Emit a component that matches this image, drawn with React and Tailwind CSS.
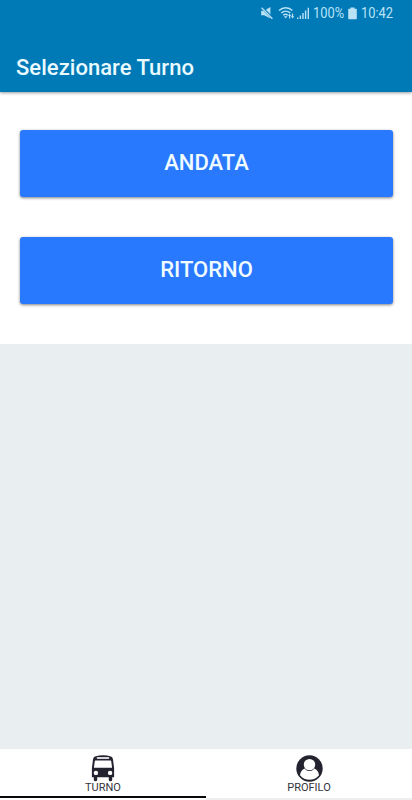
// ─── status bar ───────────────────────────────────────────────────────
function StatusBar() {
  return (
    <div className="h-[26px] flex items-center pl-[260px] text-[#b9e3f5]">
      <svg width="14" height="14" viewBox="0 0 14 14" fill="currentColor" className="shrink-0">
        <path d="M1.2 4.8h3L10.4.9v11.6L4.2 9.2h-3z" />
        <path d="M1.2.8 12.8 12.6" stroke="#0079b7" strokeWidth="2.6" />
        <path d="M1.6 1.8 12.4 12.8" stroke="currentColor" strokeWidth="1.3" />
      </svg>

      {/* wifi with traffic arrows */}
      <svg width="17" height="14" viewBox="0 0 17 14" fill="none" stroke="currentColor" strokeWidth="1.4" className="ml-1 shrink-0">
        <path d="M1 4.6C5 .8 10.6.8 14.4 4.6" />
        <path d="M3.3 7.1c2.7-2.6 6.3-2.6 9 0" />
        <path d="M5.2 9.3c1.5-1.4 3.2-1.4 4.6 0" />
        <path d="M5.9 10.2h3.6L7.7 12.6z" fill="currentColor" stroke="none" />
        <path d="M10 10l1.6-2.4L13.2 10h-1v2.6H11V10zM12.9 10.2h1V7.6h1.2v2.6h1.2l-1.7 2.4z" fill="currentColor" stroke="none" />
      </svg>

      <svg width="13" height="13" viewBox="0 0 13 13" fill="currentColor" className="ml-[2px] shrink-0">
        <path d="M0 10.5h1.4V12H0zM2.7 8.4h1.4V12H2.7zM5.3 6h1.4v6H5.3zM7.9 3.4h1.4V12H7.9zM10.6.8H12V12h-1.4z" />
      </svg>

      <span className="ml-[3px] w-[35px] text-[14px] leading-none origin-left scale-x-[0.92] whitespace-nowrap">100%</span>
      <svg width="9" height="13" viewBox="0 0 9 13" fill="currentColor" className="shrink-0">
        <path d="M2.5.5h4v1.2h1.6q.7 0 .7.7v9.1q0 .8-.7.8H.9q-.7 0-.7-.8V2.4q0-.7.7-.7h1.6z" />
      </svg>
      <span className="ml-1 text-[14px] leading-none origin-left scale-x-[0.92] whitespace-nowrap">10:42</span>
    </div>
  );
}

const BusIcon = () => (
  <svg width="24" height="27" viewBox="0 0 24 27">
    <path d="M4 1.5Q12-1 20 1.5q1.7.6 2 3L23.1 13v9.2h-1.9V25q0 1.3-1.7 1.3T17.8 25v-2.8H6.2V25q0 1.3-1.7 1.3T2.8 25v-2.8H.9V13L2 4.5q.3-2.4 2-3z" fill="#23232f" />
    <rect x="5.7" y="1.9" width="12.6" height="2.1" rx="1" fill="#d6d6d9" />
    <path d="M4.4 5.6h15.2q.5 0 .6.6l.9 6.6H2.9l.9-6.6q.1-.6.6-.6z" fill="#fff" />
    <circle cx="4.9" cy="17.9" r="2.2" fill="#fff" />
    <circle cx="19.1" cy="17.9" r="2.2" fill="#fff" />
  </svg>
);

const ProfileIcon = () => (
  <svg width="27" height="27" viewBox="0 0 27 27">
    <circle cx="13.5" cy="13.5" r="13.2" fill="#23232f" />
    <path d="M4 20.2c.4-3.6 2.2-5.9 4.6-6.8 2.7 3.4 7.1 3.4 9.8 0 2.4.9 4.2 3.2 4.6 6.8-4.6 6-14.4 6-19 0z" fill="#fff" />
    <circle cx="13.5" cy="9.6" r="5.7" fill="#fff" />
  </svg>
);

const TABS = [
  { label: "TURNO", icon: BusIcon, active: true },
  { label: "PROFILO", icon: ProfileIcon, active: false },
];

function ShiftButton({ children }) {
  return (
    <button className="h-[67px] w-full rounded-[3px] bg-[#2979ff] pb-[3px] text-[22px] font-medium text-[#f0fbff] shadow-[0_1px_3px_rgba(0,0,0,0.5)]">
      {children}
    </button>
  );
}

export default function App() {
  return (
    <div className="h-[800px] w-[412px] overflow-hidden flex flex-col bg-[#e9eef1] font-[Roboto,sans-serif]">
      <header className="relative h-[92px] shrink-0 bg-[#0079b7] shadow-[0_1px_3px_rgba(0,0,0,0.4)]">
        <StatusBar />
        <h1 className="mt-[26px] pl-4 text-[22px] leading-[32px] font-medium tracking-[0.04px] text-[#e9faff]">
          Selezionare Turno
        </h1>
      </header>

      <main className="h-[252px] shrink-0 bg-white pt-[38px] pl-5 pr-[19px] flex flex-col gap-10">
        <ShiftButton>ANDATA</ShiftButton>
        <ShiftButton>RITORNO</ShiftButton>
      </main>

      {/* bottom tabs */}
      <nav className="mt-auto h-[51px] shrink-0 grid grid-cols-2 bg-white">
        {TABS.map(({ label, icon: Icon, active }) => (
          <div key={label} className="flex flex-col items-center pt-[6px]">
            <Icon />
            <span className="text-[11px] leading-[12px] text-[#33333b]">{label}</span>
            <div className={active ? "mt-[2px] h-[2px] w-full bg-[#08080c]" : "mt-1 h-[2px] w-full bg-[#eeeeee]"} />
          </div>
        ))}
      </nav>
    </div>
  );
}
